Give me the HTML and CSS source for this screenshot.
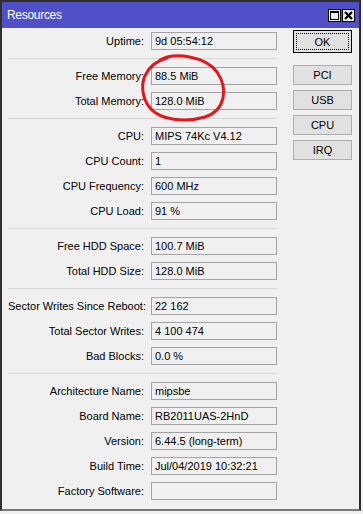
FILE: index.html
```html
<!DOCTYPE html>
<html lang="en">
<head>
    <meta charset="UTF-8">
    <title>Resources</title>
    <link rel="stylesheet" href="styles.css">
</head>
<body>

<div class="window">
    <div class="titlebar">
        <span class="title">Resources</span>
        <div class="title-buttons">
            <span class="tb-btn tb-max"><span class="max-icon"></span></span>
            <span class="tb-btn tb-close">
                <svg width="9" height="9" viewBox="0 0 9 9"><path d="M1 1 L8 8 M8 1 L1 8" stroke="#000" stroke-width="2.2"/></svg>
            </span>
        </div>
    </div>

    <div class="content">
        <div class="fields">
            <div class="group">
                <div class="row"><label>Uptime:</label><div class="value">9d 05:54:12</div></div>
            </div>
            <div class="sep"></div>
            <div class="group">
                <div class="row"><label>Free Memory:</label><div class="value">88.5 MiB</div></div>
                <div class="row"><label>Total Memory:</label><div class="value">128.0 MiB</div></div>
            </div>
            <div class="sep"></div>
            <div class="group">
                <div class="row"><label>CPU:</label><div class="value">MIPS 74Kc V4.12</div></div>
                <div class="row"><label>CPU Count:</label><div class="value">1</div></div>
                <div class="row"><label>CPU Frequency:</label><div class="value">600 MHz</div></div>
                <div class="row"><label>CPU Load:</label><div class="value">91 %</div></div>
            </div>
            <div class="sep"></div>
            <div class="group">
                <div class="row"><label>Free HDD Space:</label><div class="value">100.7 MiB</div></div>
                <div class="row"><label>Total HDD Size:</label><div class="value">128.0 MiB</div></div>
            </div>
            <div class="sep"></div>
            <div class="group">
                <div class="row"><label>Sector Writes Since Reboot:</label><div class="value">22 162</div></div>
                <div class="row"><label>Total Sector Writes:</label><div class="value">4 100 474</div></div>
                <div class="row"><label>Bad Blocks:</label><div class="value">0.0 %</div></div>
            </div>
            <div class="sep"></div>
            <div class="group">
                <div class="row"><label>Architecture Name:</label><div class="value">mipsbe</div></div>
                <div class="row"><label>Board Name:</label><div class="value">RB2011UAS-2HnD</div></div>
                <div class="row"><label>Version:</label><div class="value">6.44.5 (long-term)</div></div>
                <div class="row"><label>Build Time:</label><div class="value">Jul/04/2019 10:32:21</div></div>
                <div class="row"><label>Factory Software:</label><div class="value"></div></div>
            </div>
        </div>

        <div class="actions">
            <button class="btn btn-default"><span>OK</span></button>
            <button class="btn">PCI</button>
            <button class="btn">USB</button>
            <button class="btn">CPU</button>
            <button class="btn">IRQ</button>
        </div>
    </div>

    <!-- red marker scribble drawn over the memory fields -->
    <svg class="scribble" width="363" height="514" viewBox="0 0 363 514">
        <path d="M160 60 C175 52, 205 56, 217 72 C228 88, 226 110, 205 117 C185 123, 160 120, 150 108 C141 97, 141 82, 146 74 C150 66, 156 61, 167 58"
              fill="none" stroke="#e3171b" stroke-width="3" stroke-linecap="round"/>
    </svg>
</div>

</body>
</html>
```

FILE: styles.css
```css
body {
    margin: 0;
    background-color: #f0f0f0;
    font-family: "Liberation Sans", Arial, sans-serif;
    font-size: 11px;
    color: #000;
}
.window {
    position: relative;
    width: 361px;
    height: 511px;
    box-sizing: border-box;
    border-top: 2px solid #2e2e2e;
    border-left: 2px solid #2e2e2e;
    border-right: 2px solid #2e2e2e;
    border-bottom: 2px solid #7a7a7a;
    background-color: #f0f0f0;
}
.titlebar {
    height: 26px;
    background-color: #5151c7;
    display: flex;
    align-items: center;
    justify-content: space-between;
    padding: 0 4px 0 5px;
}
.title {
    color: #fff;
    font-size: 12px;
    letter-spacing: -0.3px;
}
.title-buttons {
    display: flex;
    gap: 1px;
}
.tb-btn {
    width: 13px;
    height: 13px;
    box-sizing: border-box;
    border: 1px solid #000;
    background-color: #ececec;
    display: flex;
    align-items: center;
    justify-content: center;
}
.max-icon {
    width: 7px;
    height: 6px;
    border: 1px solid #000;
    border-top-width: 2px;
}
.content {
    display: flex;
    padding: 2px 7px 0 6px;
}
.fields {
    width: 269px;
    padding-top: 2px;
}
.group {
    display: flex;
    flex-direction: column;
    gap: 7px;
}
.row {
    display: grid;
    grid-template-columns: 136px 126px;
    column-gap: 7px;
    align-items: center;
}
.row label {
    text-align: right;
    white-space: nowrap;
}
.value {
    height: 18px;
    box-sizing: border-box;
    border: 1px solid #a3a3a3;
    background-color: #f0f0f0;
    padding: 0 3px;
    line-height: 16px;
    white-space: nowrap;
    overflow: hidden;
}
.sep {
    margin: 8px 0;
    border-top: 1px solid #d6d6d6;
    width: 269px;
}
.actions {
    margin-left: 16px;
    width: 59px;
    display: flex;
    flex-direction: column;
    gap: 5px;
}
.btn {
    height: 20px;
    padding: 0;
    background-color: #e1e1e1;
    border: 1px solid #adadad;
    font-family: "Liberation Sans", Arial, sans-serif;
    font-size: 11px;
    color: #000;
}
.btn-default {
    height: 23px;
    margin-bottom: 7px;
    border: 1px solid #000;
    padding: 2px;
}
.btn-default span {
    display: flex;
    align-items: center;
    justify-content: center;
    height: 100%;
    border: 1px dotted #000;
    box-sizing: border-box;
}
.scribble {
    position: absolute;
    left: -2px;
    top: -2px;
    pointer-events: none;
}
```
